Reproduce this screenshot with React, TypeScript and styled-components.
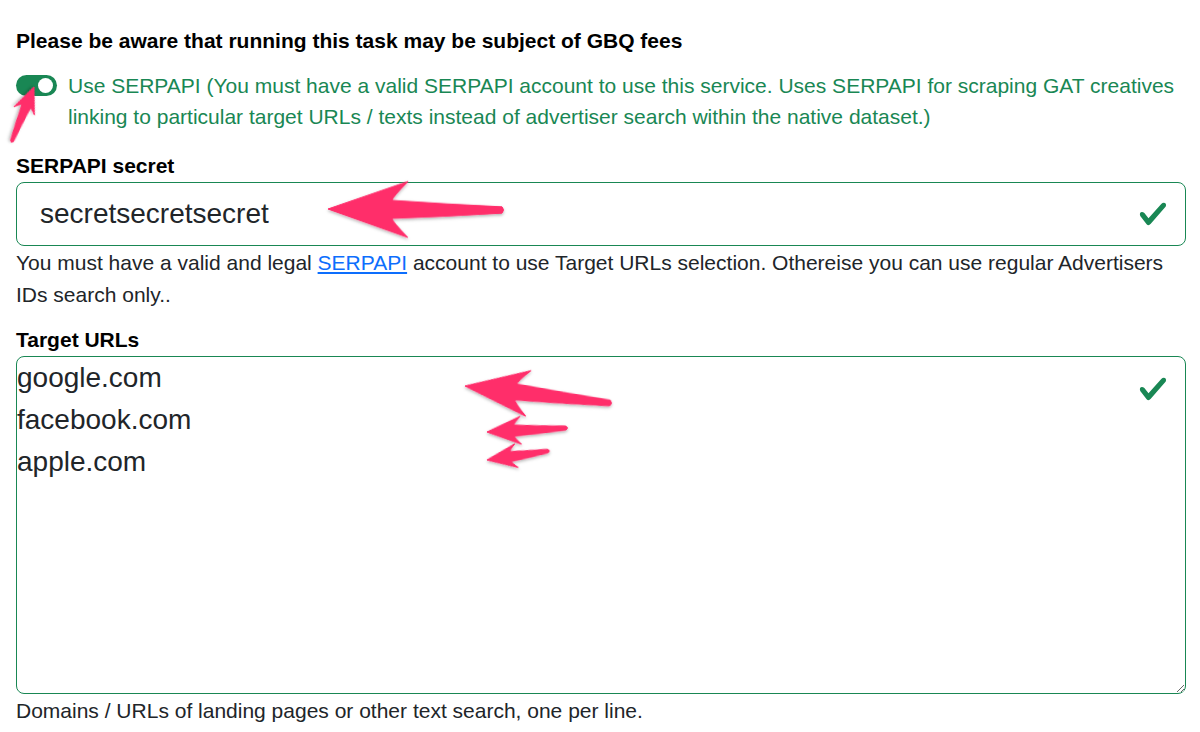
import React from 'react'
import styled, { createGlobalStyle } from 'styled-components'

const GlobalStyle = createGlobalStyle`
    body {
        margin: 0;
        background: #ffffff;
        color: #212529;
        font-family: "Liberation Sans", Arial, sans-serif;
    }
`

const green = '#198754'

const Page = styled.div`
    position: relative;
    width: 1200px;
    height: 732px;
    box-sizing: border-box;
    padding: 26px 14px 0 16px;
    overflow: hidden;
`

const Notice = styled.div`
    font-size: 21px;
    line-height: 29px;
    font-weight: bold;
    color: #000000;
`

const SwitchRow = styled.div`
    display: flex;
    gap: 11px;
    margin-top: 14.5px;
    color: ${green};
    font-size: 21px;
    line-height: 31px;
`

const Switch = styled.span`
    flex-shrink: 0;
    position: relative;
    width: 41px;
    height: 21px;
    margin-top: 5px;
    border-radius: 11px;
    background: ${green};
    &::after {
        content: '';
        position: absolute;
        right: 4px;
        top: 3px;
        width: 15px;
        height: 15px;
        border-radius: 50%;
        background: #ffffff;
    }
`

const FieldLabel = styled.label<{ gap: number }>`
    display: block;
    margin-top: ${props => props.gap}px;
    font-size: 21px;
    line-height: 29px;
    font-weight: bold;
    color: #000000;
`

const Field = styled.div`
    position: relative;
    margin-top: 2px;
`

const TextInput = styled.input`
    display: block;
    width: 100%;
    height: 64px;
    box-sizing: border-box;
    padding: 0 70px 0 23px;
    border: 1.5px solid ${green};
    border-radius: 8px;
    font-family: "Liberation Sans", Arial, sans-serif;
    font-size: 28px;
    color: #212529;
    background: #ffffff;
    outline: none;
`

const TextArea = styled.textarea`
    display: block;
    width: 100%;
    height: 338px;
    box-sizing: border-box;
    padding: 0 70px 0 0;
    border: 1.5px solid ${green};
    border-radius: 8px;
    font-family: "Liberation Sans", Arial, sans-serif;
    font-size: 28px;
    line-height: 42px;
    color: #212529;
    background: #ffffff;
    outline: none;
`

const ValidIcon = styled.svg<{ top: number }>`
    position: absolute;
    right: 18px;
    top: ${props => props.top}px;
    width: 30px;
    height: 30px;
    pointer-events: none;
`

const Help = styled.div`
    margin-top: 1px;
    font-size: 21px;
    line-height: 32px;
    color: #212529;
    a {
        color: #0d6efd;
    }
`

const Overlay = styled.svg`
    position: absolute;
    left: 0;
    top: 0;
    width: 1200px;
    height: 732px;
    pointer-events: none;
`

const Check: React.FC<{ top: number }> = ({ top }) => (
    <ValidIcon top={top} viewBox="0 0 8 8">
        <path fill={green} d="M2.3 6.73.6 4.53c-.4-1.04.46-1.4 1.1-.8l1.1 1.4 3.4-3.8c.6-.63 1.6-.27 1.2.7l-4 4.6c-.43.5-.8.4-1.1.1z" />
    </ValidIcon>
)

type ArrowProps = {
    tip: [number, number]
    tail: [number, number]
    head: number
    spread: number
    width: number
}

// skitch style arrow, tip first, drawn pointing to -x then rotated
const Arrow: React.FC<ArrowProps> = ({ tip, tail, head, spread, width }) => {
    const dx = tail[0] - tip[0]
    const dy = tail[1] - tip[1]
    const len = Math.sqrt(dx * dx + dy * dy)
    const angle = Math.atan2(dy, dx) * 180 / Math.PI
    const j = head * 0.8
    const d = `M0 0 L${head} ${-spread} Q${j} ${-width * 1.3} ${j} ${-width}
        Q${(j + len) / 2} ${-width * 0.6} ${len} ${-width * 0.35}
        Q${len + 3} 0 ${len} ${width * 0.35}
        Q${(j + len) / 2} ${width * 0.75} ${j} ${width}
        Q${j} ${width * 1.3} ${head} ${spread} Z`
    return (
        <g transform={`translate(${tip[0]} ${tip[1]}) rotate(${angle})`}>
            <path d={d} fill="#ff2d6a" stroke="#ff2d6a" strokeWidth="1" strokeLinejoin="round" filter="url(#arrowShadow)" />
        </g>
    )
}

const App: React.FC = () => (
    <Page>
        <GlobalStyle />
        <Notice>Please be aware that running this task may be subject of GBQ fees</Notice>
        <SwitchRow>
            <Switch />
            <span>Use SERPAPI (You must have a valid SERPAPI account to use this service. Uses SERPAPI for scraping GAT creatives linking to particular target URLs / texts instead of advertiser search within the native dataset.)</span>
        </SwitchRow>
        <FieldLabel gap={19}>SERPAPI secret</FieldLabel>
        <Field>
            <TextInput defaultValue="secretsecretsecret" />
            <Check top={17} />
        </Field>
        <Help>
            You must have a valid and legal <a href="#">SERPAPI</a> account to use Target URLs selection. Othereise you can use regular Advertisers IDs search only..
        </Help>
        <FieldLabel gap={14}>Target URLs</FieldLabel>
        <Field>
            <TextArea defaultValue={'google.com\nfacebook.com\napple.com'} />
            <Check top={18} />
        </Field>
        <Help>Domains / URLs of landing pages or other text search, one per line.</Help>
        <Overlay viewBox="0 0 1200 732">
            <defs>
                <filter id="arrowShadow" x="-20%" y="-50%" width="140%" height="200%">
                    <feDropShadow dx="0" dy="1.5" stdDeviation="1.5" floodColor="#000000" floodOpacity="0.3" />
                </filter>
            </defs>
            <Arrow tip={[34, 87]} tail={[12, 141]} head={26} spread={11} width={4.5} />
            <Arrow tip={[328, 209]} tail={[502, 210]} head={80} spread={28} width={9} />
            <Arrow tip={[465, 386]} tail={[610, 403]} head={64} spread={23} width={8} />
            <Arrow tip={[487, 432]} tail={[566, 428]} head={34} spread={14} width={5.5} />
            <Arrow tip={[487, 460]} tail={[548, 451]} head={30} spread={12} width={5} />
        </Overlay>
    </Page>
)

export default App
